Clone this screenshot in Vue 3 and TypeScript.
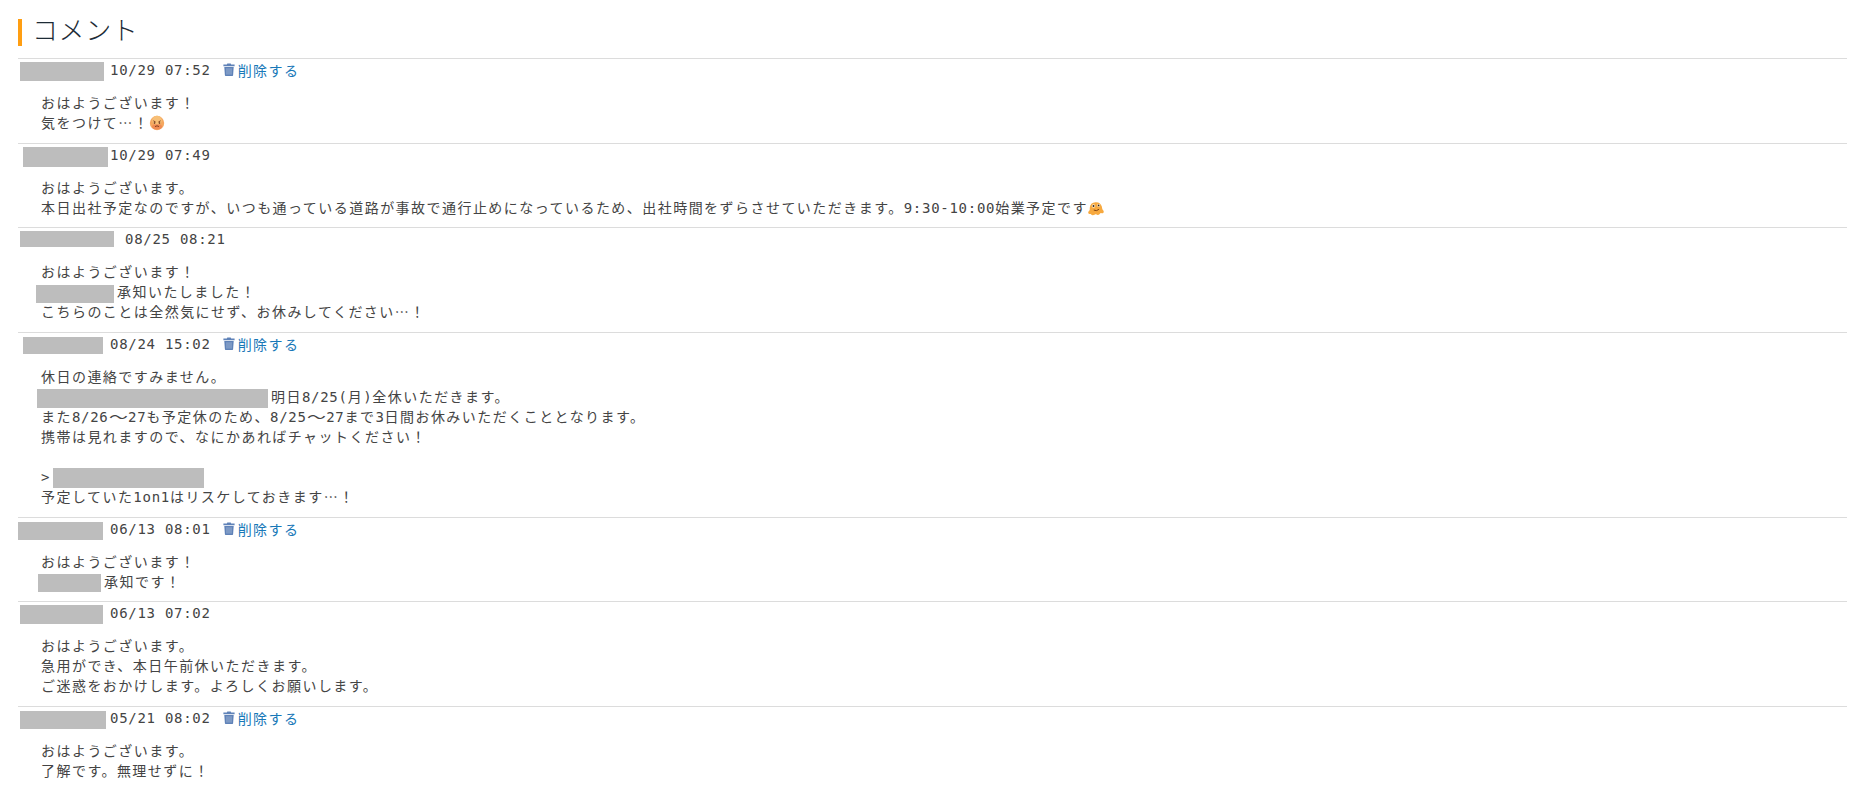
<script setup lang="ts">
type Part = { text?: string; box?: [number, number, number]; emoji?: 'hot' | 'melt' }
interface Comment {
  box: { left: number; width: number; height: number; top: number }
  dateLeft: number
  date: string
  del: boolean
  lines: Part[][]
}
const comments: Comment[] = [
  { box: { left: 2, width: 84, height: 19, top: 3 }, dateLeft: 6, date: '10/29 07:52', del: true,
    lines: [[{ text: 'おはようございます！' }], [{ text: '気をつけて…！' }, { emoji: 'hot' }]] },
  { box: { left: 5, width: 85, height: 20, top: 3 }, dateLeft: 2, date: '10/29 07:49', del: false,
    lines: [[{ text: 'おはようございます。' }], [{ text: '本日出社予定なのですが、いつも通っている道路が事故で通行止めになっているため、出社時間をずらさせていただきます。9:30-10:00始業予定です' }, { emoji: 'melt' }]] },
  { box: { left: 2, width: 94, height: 16, top: 3 }, dateLeft: 11, date: '08/25 08:21', del: false,
    lines: [[{ text: 'おはようございます！' }], [{ box: [-5, 78, 18] }, { text: '承知いたしました！' }], [{ text: 'こちらのことは全然気にせず、お休みしてください…！' }]] },
  { box: { left: 5, width: 80, height: 17, top: 4 }, dateLeft: 7, date: '08/24 15:02', del: true,
    lines: [[{ text: '休日の連絡ですみません。' }], [{ box: [-4, 231, 19] }, { text: '明日8/25(月)全休いただきます。' }], [{ text: 'また8/26～27も予定休のため、8/25～27まで3日間お休みいただくこととなります。' }], [{ text: '携帯は見れますので、なにかあればチャットください！' }], [], [{ text: '>' }, { box: [3, 151, 20] }], [{ text: '予定していた1on1はリスケしておきます…！' }]] },
  { box: { left: 0, width: 85, height: 18, top: 4 }, dateLeft: 7, date: '06/13 08:01', del: true,
    lines: [[{ text: 'おはようございます！' }], [{ box: [-3, 63, 18] }, { text: '承知です！' }]] },
  { box: { left: 2, width: 83, height: 19, top: 3 }, dateLeft: 7, date: '06/13 07:02', del: false,
    lines: [[{ text: 'おはようございます。' }], [{ text: '急用ができ、本日午前休いただきます。' }], [{ text: 'ご迷惑をおかけします。よろしくお願いします。' }]] },
  { box: { left: 2, width: 86, height: 18, top: 4 }, dateLeft: 4, date: '05/21 08:02', del: true,
    lines: [[{ text: 'おはようございます。' }], [{ text: '了解です。無理せずに！' }]] }
]
// Split a line into runs of Latin and of Japanese text, each set in its own family.
function runs(text: string): { t: string; cls: string }[] {
  return text
    .split(/([0-9A-Za-z:\/()>-]+|～)/)
    .filter((t) => t.length > 0)
    .map((t) => ({ t, cls: t === '～' ? 'wave' : /^[0-9A-Za-z:\/()>-]+$/.test(t) ? 'latin' : '' }))
}
</script>

<template>
  <div class="page" lang="ja">
    <h2 class="title">コメント</h2>
    <div v-for="(c, i) in comments" :key="i" class="comment">
      <div class="head">
        <span class="mask" :style="{ marginLeft: c.box.left + 'px', width: c.box.width + 'px', height: c.box.height + 'px', marginTop: c.box.top + 'px' }"></span>
        <span class="date latin" :style="{ marginLeft: c.dateLeft + 'px' }">{{ c.date }}</span>
        <a v-if="c.del" class="del">
          <svg class="trash" viewBox="0 0 12 13" width="12" height="13">
            <path d="M4.300 0.400h3.400l.5 1H11.600v1.800H.4V1.400h3.400z" fill="#5f82b8" />
            <path d="M1.300 3.900h9.400l-.6 8.400a.7.7 0 0 1-.7.6H2.600a.7.7 0 0 1-.7-.6z" fill="#5f82b8" />
            <path d="M4 5.200v6.400M6 5.200v6.400M8 5.200v6.400" stroke="#a9bcd8" stroke-width=".8" fill="none" />
          </svg>削除する
        </a>
      </div>
      <div class="body">
        <div v-for="(line, j) in c.lines" :key="j" class="line">
          <template v-for="(p, k) in line" :key="k">
            <span v-if="p.box" class="mask inline" :style="{ marginLeft: p.box[0] + 'px', width: p.box[1] + 'px', height: p.box[2] + 'px' }"></span>
            <svg v-else-if="p.emoji === 'hot'" class="emoji" viewBox="0 0 16 16" width="16" height="16">
              <circle cx="8" cy="8" r="7.200" fill="#f5a75f" />
              <circle cx="8" cy="5.500" r="4.800" fill="#f8c67c" opacity=".8" />
              <ellipse cx="8" cy="11.800" rx="5" ry="2.800" fill="#ea7048" opacity=".5" />
              <path d="M4.400 5.800l2.200 1.200M11.600 5.800L9.400 7" stroke="#7a3418" stroke-width=".9" fill="none" />
              <circle cx="5.500" cy="8" r=".8" fill="#4a1c10" />
              <circle cx="10.500" cy="8" r=".8" fill="#4a1c10" />
              <path d="M6 11.600q2-1.600 4 0" stroke="#7a3418" stroke-width=".9" fill="none" />
            </svg>
            <svg v-else-if="p.emoji === 'melt'" class="emoji" viewBox="1 0.500 14.500 14.500" width="16" height="16">
              <path d="M2.600 7.500a5.600 5.600 0 0 1 11-.8c.2 1.600.3 2.400 1.300 3.400 1.100 1.400-.6 3-2 2.200-.8-.4-1.300 1.800-3.200 1.700-1 0-1.400-.8-2.300-.4-1.500 1-2.900 1-3.500 0-.4-.6-.8-.4-1.600-.4-1.500-.4-1.500-2.200 0-3.200.4-.4.300-1.500.3-2.500z" fill="#f7a93f" />
              <circle cx="6" cy="6" r="1.600" fill="#fff2d6" />
              <circle cx="6" cy="6" r=".9" fill="#3d2410" />
              <circle cx="10.600" cy="5.400" r="1.300" fill="#fff2d6" />
              <circle cx="10.600" cy="5.400" r=".8" fill="#3d2410" />
              <path d="M6.200 9.600q2.600 1.400 4.800-.7" stroke="#7a3e10" stroke-width=".9" fill="none" />
            </svg>
            <template v-else>
              <span v-for="(r, m) in runs(p.text ?? '')" :key="m" :class="r.cls">{{ r.t }}</span>
            </template>
          </template>
        </div>
      </div>
    </div>
  </div>
</template>

<style>
html, body { margin: 0; background: #fff; }
</style>

<style scoped>
.page {
  height: 790px;
  overflow: hidden;
  padding: 0 12px 0 18px;
  font-family: "Noto Sans CJK JP", "Noto Sans", sans-serif;
  font-size: 14px;
  color: #444;
  letter-spacing: 1.46px;
}
.title {
  margin: 19px 0 12px;
  height: 27px;
  border-left: 4px solid #ff9e12;
  padding-left: 10px;
  font-size: 26px;
  font-weight: 300;
  letter-spacing: .6px;
  line-height: 20px;
  color: #1d2b36;
}
.comment {
  border-top: 1px solid #dcdcdc;
  padding-bottom: 10.67px;
}
.head {
  display: flex;
  align-items: flex-start;
  height: 24px;
  line-height: 22px;
}
.latin {
  font-family: "DejaVu Sans Mono", monospace;
  font-size: 14px;
  letter-spacing: .72px;
}
.wave {
  display: inline-block;
  width: 19.5px;
  letter-spacing: 0;
  transform: scaleX(1.35);
  transform-origin: left center;
}
.mask {
  flex: none;
  display: inline-block;
  background: #bdbdbd;
}
.mask.inline {
  vertical-align: middle;
  margin-right: 3px;
}
.date {
  margin-right: 12px;
}
.del {
  color: #1878b8;
}
.trash {
  vertical-align: 0;
  margin-right: 3px;
}
.body {
  margin-top: 9px;
  padding-left: 23px;
}
.line {
  height: 20px;
  line-height: 20px;
  white-space: nowrap;
}
.emoji {
  vertical-align: -3px;
}
</style>
